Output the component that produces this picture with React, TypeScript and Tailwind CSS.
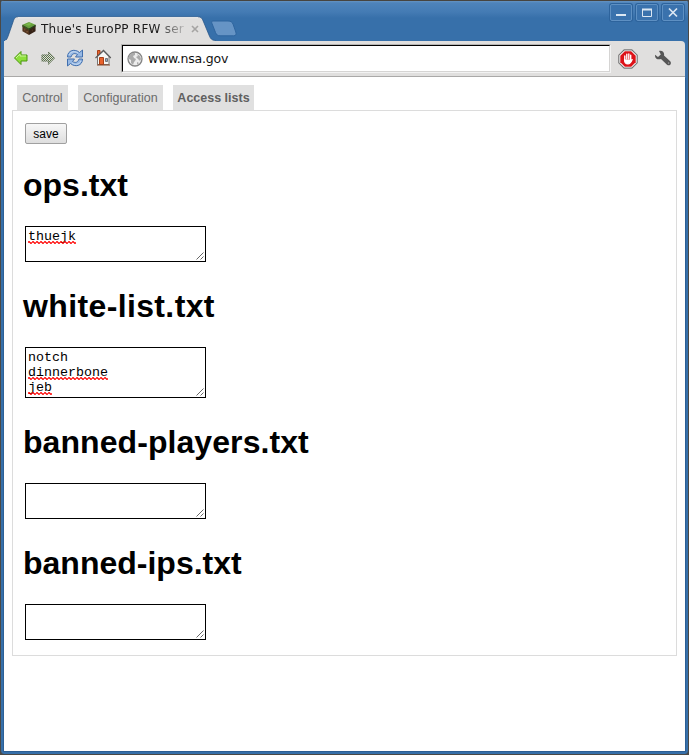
import React from "react";

function GrassBlock() {
  return (
    <svg className="mt-[5px] h-[15px] w-[14px] shrink-0" viewBox="0 0 14 16">
      <path d="M0 4 L7 1 L14 4 L7 8Z" fill="#67a23c" />
      <path d="M3 4 L7 2 L10 3 L7 5Z" fill="#7cb84b" />
      <path d="M0 4 L7 8 V15 L0 11Z" fill="#52351f" />
      <path d="M14 4 L7 8 V15 L14 11Z" fill="#352216" />
      <path d="M0 4 L7 8 V10 L5 8 L4 9 L2 6 L1 7 L0 6Z" fill="#345b20" />
      <path d="M14 4 L7 8 V10 L9 8 L10 8 L12 6 L14 6Z" fill="#27491b" />
      <path d="M2 8h1v2H2zM4 11h2v1H4z" fill="#80583a" />
      <path d="M10 9h1v2h-1zM12 7h1v1h-1z" fill="#543a29" />
    </svg>
  );
}

function WinButton({ children }: { children: React.ReactNode }) {
  return (
    <div className="flex h-[17px] w-[22px] items-center justify-center rounded-[2px] border border-[#5e90c3] bg-[#3a72ad] shadow-[0_0_0_1px_#2d639c]">
      <svg className="h-[11px] w-[12px]" viewBox="0 0 12 11" fill="none" stroke="#dbe7f3">
        {children}
      </svg>
    </div>
  );
}

function TitleBar() {
  return (
    <div className="flex h-[41px] bg-[linear-gradient(#47443f_0,#47443f_1px,#6593c2_1px,#4e83ba_3px,#447bb4_12px,#3770aa_18px,#3770aa_100%)]">
      <div className="relative mt-[16px] flex h-[25px] w-[212px] shrink-0">
        <svg className="absolute top-0 left-0 h-[25px] w-[216px]" viewBox="0 0 216 25">
          <path
            d="M4 25.5 C6.5 24.5 7.5 22 8.5 19 L13 6 C14.3 2 15.5 .8 18 .8 H198 C201 .8 202 2 203.2 5 L209 19 C210.5 23 212 24.5 216 24.5 V26Z"
            fill="#e0dfde"
            stroke="#255487"
            strokeOpacity=".75"
          />
          <path d="M18 1.7H198" stroke="#efeeed" />
          <path d="M5 24.8H212" stroke="#e0dfde" />
        </svg>
        <div className="relative flex w-full pl-[22px]">
          <GrassBlock />
          <span className="ml-[5px] h-[25px] w-[145px] overflow-hidden bg-[linear-gradient(90deg,#1b1b1b_80%,#c5c4c3_100%)] bg-clip-text font-['DejaVu_Sans',sans-serif] text-[12px] leading-[26px] tracking-[0.22px] whitespace-nowrap text-transparent">
            Thue's EuroPP RFW ser
          </span>
          <svg className="mt-[9px] ml-[5px] h-[8px] w-[8px] shrink-0" viewBox="0 0 8 8">
            <path d="M1 1L7 7M7 1L1 7" stroke="#a5a4a3" strokeWidth="1.6" />
          </svg>
        </div>
      </div>
      <svg className="mt-[20px] -ml-px h-[17px] w-[26px] shrink-0" viewBox="0 0 26 17">
        <path
          d="M2 1 H17 C20 1 21 2 22 4 L24.8 12 C25.5 14.5 25 15.8 22.5 15.8 H9 C6.5 15.8 5.5 14.8 4.5 12.5 L1 3.5 C.3 1.8 .8 1 2 1Z"
          fill="#6694c5"
          stroke="#2f659e"
        />
      </svg>
      <div className="mt-[4px] mr-[5px] ml-auto flex gap-[4px]">
        <WinButton>
          <path d="M1 8H11" strokeWidth="2" />
        </WinButton>
        <WinButton>
          <path d="M1.5 2V9.5H10.5V2" />
          <path d="M1 2.5H11" strokeWidth="2" />
        </WinButton>
        <WinButton>
          <path d="M2 1.5L10 9.5M10 1.5L2 9.5" strokeWidth="1.7" />
        </WinButton>
      </div>
    </div>
  );
}

function BackIcon() {
  return (
    <svg className="h-[16px] w-[16px]" viewBox="0 0 16 16">
      <path d="M1.5 8 L8 1.5 V5 H14 V11 H8 V14.5Z" fill="#8ddf3b" stroke="#4b970d" strokeLinejoin="round" />
      <path d="M3 8L7 4V6H13" fill="none" stroke="#ccf59c" />
    </svg>
  );
}

function ForwardIcon() {
  return (
    <svg className="h-[16px] w-[16px]" viewBox="0 0 16 16">
      <defs>
        <pattern id="check" width="2" height="2" patternUnits="userSpaceOnUse">
          <path d="M0 0h1v1H0zM1 1h1v1H1z" fill="#5b7548" />
        </pattern>
      </defs>
      <path d="M15 8 L8 1 V4.5 H1.5 V11.5 H8 V15Z" fill="url(#check)" />
      <path d="M14.5 8 L8.5 2 V5 H2 V11 H8.5 V14Z" fill="none" stroke="#69745f" strokeOpacity=".5" />
    </svg>
  );
}

function ReloadIcon() {
  return (
    <svg className="h-[18px] w-[18px]" viewBox="0 0 18 18" strokeLinejoin="round">
      <path
        d="M1.5 8 C1.5 1 9 -.5 13.5 3.5 L16.5 1 V8 H9.5 L11.5 5.5 C8 3.5 6 5 5 8Z"
        fill="#98b9e4"
        stroke="#416fae"
      />
      <path
        d="M16.5 10 C16.5 17 9 18.5 4.5 14.5 L1.5 17 V10 H8.5 L6.5 12.5 C10 14.5 12 13 13 10Z"
        fill="#98b9e4"
        stroke="#416fae"
      />
      <path d="M3 6C5 2 9 2 12 4M15 12C13 16 9 16 6 14" fill="none" stroke="#c8dcf3" />
    </svg>
  );
}

function HomeIcon() {
  return (
    <svg className="h-[17px] w-[18px]" viewBox="0 0 18 17">
      <path d="M3.5 1.5H6V6L3.5 8Z" fill="#e96732" stroke="#a83f17" />
      <path d="M3.5 7.5 L9.5 2 L15 7.5 V15.5 H3.5Z" fill="#f6f6f4" stroke="#777" />
      <path d="M1.5 9 L9.5 1.3 L16.8 9" fill="none" stroke="#5a5a5a" strokeWidth="1.2" />
      <path d="M5.5 8.5H9.5V15.5H5.5Z" fill="#e8622c" stroke="#a83f17" />
      <path d="M11.5 9.5H13.5V12.5H11.5Z" fill="#8ba8cc" stroke="#777" />
      <path d="M3 16H16" stroke="#8a4a2a" />
    </svg>
  );
}

function GlobeIcon() {
  return (
    <svg className="h-[16px] w-[16px] shrink-0" viewBox="0 0 16 16">
      <circle cx="8" cy="8" r="7" fill="#ececec" stroke="#858585" strokeWidth="1.3" />
      <path d="M2 5L5 2L8 2L8 4L6 5L7 7L9 8L8 10L7 11L6 14L4 12L4 9L2 8Z" fill="#aaa" />
      <path d="M10 3L13 5L14 8L13 10L11 8L9 6L11 5ZM10 11L12 12L10 14Z" fill="#aaa" />
    </svg>
  );
}

function StopHandIcon() {
  return (
    <svg className="h-[20px] w-[20px]" viewBox="0 0 20 20">
      <path d="M6.2 .8H13.8L19.2 6.2V13.8L13.8 19.2H6.2L.8 13.8V6.2Z" fill="#fff" stroke="#777" strokeWidth="1.2" />
      <path d="M6.8 2.3H13.2L17.7 6.8V13.2L13.2 17.7H6.8L2.3 13.2V6.8Z" fill="#dc1218" />
      <path
        d="M6.5 10.5C6.5 14 8 15 10 15S13 13.5 14.2 10.6"
        fill="#fff"
        stroke="#fff"
        strokeWidth="1.2"
        strokeLinecap="round"
      />
      <path
        d="M6.8 11V7M8.8 10V5.2M10.8 10V5M12.7 11V6.2"
        stroke="#fff"
        strokeWidth="1.4"
        strokeLinecap="round"
      />
    </svg>
  );
}

function WrenchIcon() {
  return (
    <svg className="h-[17px] w-[18px]" viewBox="0 0 18 17">
      <path
        d="M5 1 C8.5 .2 10.7 2.5 10 5.5 L16.2 11.2 C18.2 13.5 15.5 16.7 13 14.7 L7 9 C3.8 10.2 .6 8.3 1 4.8 L4 7 L6.8 4.5Z"
        fill="#565656"
      />
      <circle cx="14.6" cy="13.1" r=".8" fill="#999" />
    </svg>
  );
}

function Toolbar() {
  return (
    <div className="mx-[4px] flex h-[36px] items-center rounded-tr-[4px] border-b border-[#aaa9a8] bg-[#e0dfde] pl-[9px]">
      <div className="flex items-center pb-[2px]">
        <BackIcon />
        <span className="ml-[11px]">
          <ForwardIcon />
        </span>
        <span className="ml-[10px]">
          <ReloadIcon />
        </span>
        <span className="ml-[10px]">
          <HomeIcon />
        </span>
      </div>
      <div className="ml-[9px] h-[29px] w-[490px] border border-t-[#b5b4b3] border-r-[#f2f2f2] border-b-[#f2f2f2] border-l-[#b5b4b3]">
        <div className="flex h-full items-center border-t border-r border-b border-l border-t-black border-r-[#d5d4d3] border-b-[#d5d4d3] border-l-black bg-white pl-[4px]">
          <GlobeIcon />
          <span className="ml-[5px] font-['DejaVu_Sans',sans-serif] text-[12.5px] leading-[16px] tracking-[-0.22px] text-[#111]">
            www.nsa.gov
          </span>
        </div>
      </div>
      <span className="ml-[7px]">
        <StopHandIcon />
      </span>
      <span className="ml-[16px]">
        <WrenchIcon />
      </span>
    </div>
  );
}

function Word({ text, misspelt }: { text: string; misspelt?: boolean }) {
  return (
    <div className="h-[15px]">
      <span className="relative inline-block h-[15px]">
        {text}
        {misspelt && (
          <svg className="absolute top-[12px] left-0 h-[3px] w-full">
            <defs>
              <pattern id="squiggle" width="4" height="3" patternUnits="userSpaceOnUse">
                <path d="M0 1.5L1 .5L3 2.5L4 1.5" fill="none" stroke="#f00" strokeWidth="1.2" />
              </pattern>
            </defs>
            <rect width="100%" height="3" fill="url(#squiggle)" />
          </svg>
        )}
      </span>
    </div>
  );
}

function ListFile({
  name,
  words,
  tall,
  heading = "",
}: {
  name: string;
  words: { text: string; misspelt?: boolean }[];
  tall?: boolean;
  heading?: string;
}) {
  return (
    <section>
      <h1 className={`h-[37px] text-[32px] leading-[37px] font-bold ${heading}`}>{name}</h1>
      <div
        className={`relative mt-[22px] ml-[2px] w-[181px] border border-black px-[2px] pt-[2px] font-['Liberation_Mono',monospace] text-[13.333px] leading-[15px] ${tall ? "h-[51px]" : "h-[36px]"}`}
      >
        {words.map((word) => (
          <Word key={word.text} text={word.text} misspelt={word.misspelt} />
        ))}
        <svg className="absolute right-[1px] bottom-[1px] h-[8px] w-[8px]" viewBox="0 0 8 8">
          <path d="M.5 7.5L7.5 .5M4.5 7.5L7.5 4.5" stroke="#555" strokeWidth=".9" />
        </svg>
      </div>
    </section>
  );
}

export default function App() {
  return (
    <div className="flex h-[755px] w-[689px] flex-col overflow-hidden bg-[#4b4946] font-['Liberation_Sans',sans-serif] text-black">
      <div className="flex h-[754px] w-[689px] flex-col overflow-hidden rounded-[4px] border-x border-[#4b4946] bg-[#3770aa]">
        <div className="-mx-px">
          <TitleBar />
          <Toolbar />
        </div>
        <main className="mx-[3px] h-[674px] bg-white pt-[8px] shadow-[-1px_1px_0_0_#2c5f95,1px_1px_0_0_#2c5f95]">
          <nav className="ml-[13px] flex h-[25px] gap-[10px] text-[12.5px] leading-[26px] text-[#6b6b6b]">
            <span className="w-[51px] bg-[#e0e0e0] text-center">Control</span>
            <span className="w-[85px] bg-[#e0e0e0] text-center">Configuration</span>
            <span className="w-[81px] bg-[#e0e0e0] text-center font-bold text-[#606060]">Access lists</span>
          </nav>
          <div className="ml-[8px] h-[546px] w-[665px] border border-[#dcdcdc] pt-[12px] pl-[10px]">
            <button className="ml-[2px] block h-[21px] w-[42px] rounded-[2px] border border-[#a0a0a0] bg-linear-to-b from-[#f7f7f7] to-[#dedede] text-[12px] leading-[20px]">
              save
            </button>
            <div className="mt-[23px] flex flex-col gap-[26px]">
              <ListFile name="ops.txt" words={[{ text: "thuejk", misspelt: true }]} />
              <ListFile
                name="white-list.txt"
                heading="tracking-[0.37px]"
                tall
                words={[{ text: "notch" }, { text: "dinnerbone", misspelt: true }, { text: "jeb", misspelt: true }]}
              />
              <ListFile name="banned-players.txt" heading="tracking-[0.07px]" words={[]} />
              <ListFile name="banned-ips.txt" words={[]} />
            </div>
          </div>
        </main>
      </div>
    </div>
  );
}
